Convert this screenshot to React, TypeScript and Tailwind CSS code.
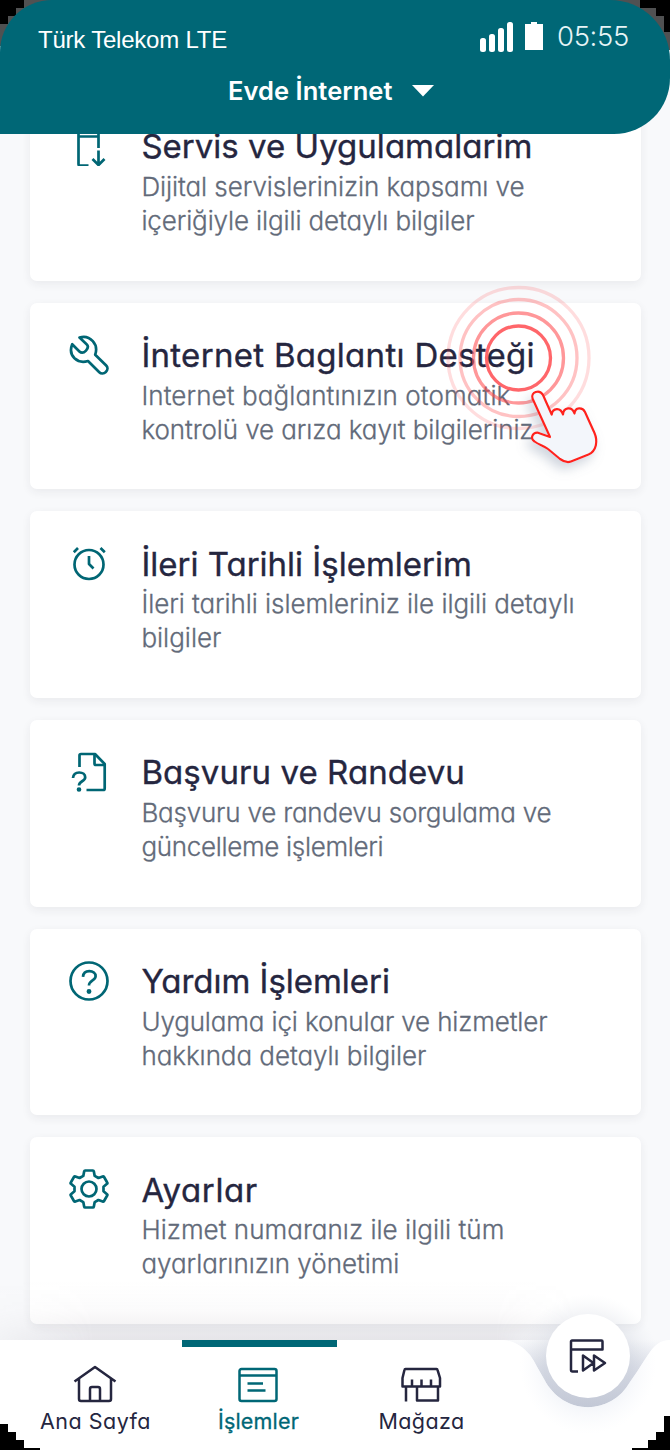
import { useLayoutEffect, useRef, useState, type ReactNode } from "react";

/* One line of text, tracked so that it fills the given width. */
function Line({ text, width, className = "" }: { text: string; width: number; className?: string }) {
  const ref = useRef<HTMLSpanElement>(null);
  const [spacing, setSpacing] = useState(0);
  useLayoutEffect(() => {
    if (ref.current) {
      const natural = ref.current.getBoundingClientRect().width;
      setSpacing((width - natural) / text.length);
    }
  }, [text, width]);
  return (
    <span className={"flex whitespace-nowrap " + className}>
      <span ref={ref} style={{ letterSpacing: `${spacing}px` }}>
        {text}
      </span>
    </span>
  );
}

type Row = { title: [string, number]; lines: [string, number][]; icon: ReactNode };

const ServiceIcon = () => (
  <g transform="translate(3.500 0)">
    <path d="M26 22V6a2 2 0 0 0-2-2H8a2 2 0 0 0-2 2v32a1.500 1.500 0 0 0 1.500 1.500H16M6 10.500h20" />
    <path d="M26 24.500v14.500M20 33l6 6 6-6" />
  </g>
);

const WrenchIcon = () => (
  <path d="M10.500 2.600 L17.600 9.200 C20 11.500 18.500 14 17 15.600 C15 17.700 12.500 18.400 10.400 16.400 L3.200 9.300 C0.500 16 2.200 20 5.500 23.300 C9 26.600 14 27.500 19 26 L30.300 37.200 C32 38.900 35 38.700 36.800 37 C38.800 35 39 32.300 37.200 30.500 L26.200 19.700 C28 14.500 26.800 9.500 23.800 6.200 C20 2 15.500 1 10.500 2.600Z" />
);

const AlarmIcon = () => (
  <g>
    <circle cx="20" cy="21.500" r="14.500" />
    <path d="M20 13v8l4.500 4.500M4.800 9.200 9 5M31.500 5l4.300 4.200" />
  </g>
);

const FileIcon = () => (
  <g>
    <path d="M10.500 15V3.500A1.500 1.500 0 0 1 12 2h14l9.700 10v24.500a1.500 1.500 0 0 1-1.500 1.500H17.500" />
    <path d="M25.500 2v9.500a1.500 1.500 0 0 0 1.500 1.500h9" />
    <path d="M4 26c.3-3.400 2.800-5.500 6.200-5.500 3.700 0 6 2 6 4.700 0 4.300-6.200 3.800-6.200 8.300" />
    <circle cx="10" cy="37.500" r="1" fill="#006674" />
  </g>
);

const HelpIcon = () => (
  <g>
    <circle cx="20" cy="20" r="18.500" />
    <path d="M14 15.800c.3-3.500 2.800-5.600 6.300-5.600 3.800 0 6.300 2.100 6.300 5 0 4.300-6.600 4.200-6.600 9.300" />
    <circle cx="20" cy="30.500" r="1.100" fill="#006674" />
  </g>
);

const GearIcon = () => (
  <g>
    <path d="M16.200 1.500h7.600a1 1 0 0 1 1 .8l.9 4.600 3.700 2.100 4.300-1.600a1 1 0 0 1 1.200.4l3.300 5.700a1 1 0 0 1-.2 1.300L34.500 17.800v4.400l3.500 3a1 1 0 0 1 .2 1.300l-3.300 5.700a1 1 0 0 1-1.200.4L29.400 31l-3.700 2.100-.9 4.600a1 1 0 0 1-1 .8h-7.600a1 1 0 0 1-1-.8l-.9-4.600L10.600 31l-4.300 1.600a1 1 0 0 1-1.200-.4l-3.300-5.700a1 1 0 0 1 .2-1.300l3.500-3v-4.400L2 14.800a1 1 0 0 1-.2-1.300l3.300-5.700a1 1 0 0 1 1.200-.4L10.600 9l3.700-2.100.9-4.600a1 1 0 0 1 1-.8Z" />
    <circle cx="20" cy="20" r="7.500" />
  </g>
);

const rows: Row[] = [
  { title: ["Servis ve Uygulamalarim", 391], lines: [["Dijital servislerinizin kapsamı ve", 383], ["içeriğiyle ilgili detaylı bilgiler", 333]], icon: <ServiceIcon /> },
  { title: ["İnternet Baglantı Desteği", 393.5], lines: [["Internet bağlantınızın otomatik", 369], ["kontrolü ve arıza kayıt bilgileriniz", 392]], icon: <WrenchIcon /> },
  { title: ["İleri Tarihli İşlemlerim", 330.5], lines: [["İleri tarihli islemleriniz ile ilgili detaylı", 433], ["bilgiler", 80]], icon: <AlarmIcon /> },
  { title: ["Başvuru ve Randevu", 323.5], lines: [["Başvuru ve randevu sorgulama ve", 410], ["güncelleme işlemleri", 242]], icon: <FileIcon /> },
  { title: ["Yardım İşlemleri", 248.5], lines: [["Uygulama içi konular ve hizmetler", 406], ["hakkında detaylı bilgiler", 285]], icon: <HelpIcon /> },
  { title: ["Ayarlar", 116.5], lines: [["Hizmet numaranız ile ilgili tüm", 363], ["ayarlarınızın yönetimi", 258]], icon: <GearIcon /> },
];

function Card({ row }: { row: Row }) {
  return (
    <article className="flex h-[186.5px] shrink-0 rounded-[7px] bg-white pt-[31px] pl-[39px] shadow-[0_3px_10px_rgba(40,45,60,0.07)]">
      <svg className="mt-px h-10 w-10 shrink-0" viewBox="0 0 40 40" fill="none" stroke="#006674" strokeWidth="2.7" strokeLinejoin="round">
        {row.icon}
      </svg>
      <div className="ml-[32.4px]">
        <Line text={row.title[0]} width={row.title[1]} className="h-[44px] items-center text-[33px] font-normal text-[#25263f] [-webkit-text-stroke:0.35px_#25263f]" />
        <div className="mt-px text-[26px] leading-[34px] text-[#626a79]">
          {row.lines.map(([text, width]) => (
            <Line key={text} text={text} width={width} className="h-[34px] items-center font-light [-webkit-text-stroke:0.3px_#626a79]" />
          ))}
        </div>
      </div>
    </article>
  );
}

function Header() {
  return (
    <header className="relative z-10 h-[134px] shrink-0">
      <svg className="absolute inset-x-0 top-0" width="670" height="60" shapeRendering="crispEdges">
        <path d="M0 0h60v46H0zM610 0h60v50h-60z" fill="#505152" />
        <path d="M0 0h24v8h-8v8H8v8H0zM640 0h30v32h-6V16h-8V8h-16z" fill="#000" />
      </svg>
      <div className="relative flex h-full flex-col rounded-tl-[52px] rounded-tr-[60px] rounded-br-[56px] bg-[#006776] text-white">
        <div className="flex h-[68px] items-center pt-[11px] pr-[41px] pl-[38px]">
          <Line text="Türk Telekom LTE" width={189} className="font-['Liberation_Sans',sans-serif] text-[24px]" />
          <svg className="mb-[5px] ml-auto" width="64" height="32" fill="#fff">
            <rect x="0" y="17" width="6" height="14" rx="2.500" />
            <rect x="9" y="13" width="6" height="18" rx="2.500" />
            <rect x="18" y="7" width="6" height="24" rx="2.500" />
            <rect x="27" y="1" width="6" height="30" rx="2.500" />
            <path d="M45 3h6V1h6v2h6v26H45z" />
          </svg>
          <Line text="05:55" width={72} className="mb-[5px] ml-[13px] text-[27.5px] font-light text-[#e6f4f6]" />
        </div>
        <div className="flex h-[46px] items-center pl-[228px]">
          <Line text="Evde İnternet" width={164.5} className="text-[25.5px] font-semibold" />
          <svg className="ml-[19.5px]" width="22" height="12" fill="#fff">
            <path d="M0 0h22L11 11.500z" />
          </svg>
        </div>
      </div>
    </header>
  );
}

function TapHint() {
  return (
    <svg className="absolute top-[280px] left-[430px] z-10" width="200" height="210" fill="none">
      <defs>
        <filter id="soft" x="-40%" y="-40%" width="180%" height="180%">
          <feDropShadow dx="-4" dy="6" stdDeviation="6" floodColor="#8795ac" floodOpacity="0.4" />
        </filter>
      </defs>
      <g stroke="#ff4b50" strokeWidth="3.300">
        <circle cx="88.500" cy="78" r="32" strokeOpacity="0.85" />
        <circle cx="88.500" cy="78" r="45" strokeOpacity="0.58" />
        <circle cx="88.500" cy="78" r="58.500" strokeOpacity="0.34" />
        <circle cx="88.500" cy="78" r="70.500" strokeOpacity="0.19" />
      </g>
      <path
        d="M102.500 118.500C100.500 112 109.500 109 113 115L121.700 134.500C122.500 128 130.500 126.500 133 134.500C133.500 127 142 126 144.500 133.500C145 127 152.500 127 155 132L164.500 153C168 161 166.500 171 158.500 174.500L141 181.500C137 183 133.500 181.500 130 179L118 169C114 165.500 109 165 104.500 161.500C99.500 158 103 152 108 152.700L120 157Z"
        fill="#f3f6fb"
        stroke="#ff241f"
        strokeWidth="2.200"
        strokeLinejoin="round"
        filter="url(#soft)"
      />
    </svg>
  );
}

function Tab({ label, width, active = false, children }: { label: string; width: number; active?: boolean; children: ReactNode }) {
  return (
    <button className={"flex w-[163px] flex-col items-center " + (active ? "text-[#006776] [-webkit-text-stroke:0.3px_#006776]" : "text-[#25263f]")}>
      <span className={"h-[7px] w-[155px] " + (active ? "relative left-px bg-[#006776]" : "")} />
      <svg className="mt-[17px] mr-px h-10 w-[44px]" viewBox="0 0 44 40" fill="none" stroke="currentColor" strokeWidth="2.500" strokeLinejoin="round">
        {children}
      </svg>
      <Line text={label} width={width} className="mt-[2px] h-[30px] items-center text-[21.5px]" />
    </button>
  );
}

const barEdge = "C514 50 522 56 530 65C535 72 539 81 544 89C563 126 611 126 630 92C636 84 643 72 650 62C655 55 660 50 670 50";

function BottomBar() {
  return (
    <nav className="absolute bottom-0 left-0 z-20 h-[110px] w-full">
      <svg className="absolute -top-[70px] left-0" width="670" height="180" viewBox="0 -20 670 180">
        <defs>
          <linearGradient id="shade" x1="0" y1="0" x2="0" y2="1">
            <stop offset="0" stopColor="#817889" stopOpacity="0" />
            <stop offset="0.500" stopColor="#817889" stopOpacity="0.030" />
            <stop offset="1" stopColor="#817889" stopOpacity="0.150" />
          </linearGradient>
          <linearGradient id="side" x1="0" y1="0" x2="1" y2="0">
            <stop offset="0" stopColor="#555" />
            <stop offset="0.140" stopColor="#fff" />
            <stop offset="0.740" stopColor="#fff" />
            <stop offset="0.860" stopColor="#000" />
          </linearGradient>
          <mask id="fade">
            <rect y="-20" width="670" height="90" fill="url(#side)" />
          </mask>
          <linearGradient id="notch" gradientUnits="userSpaceOnUse" x1="0" y1="50" x2="0" y2="117">
            <stop offset="0" stopColor="#a9b1c6" stopOpacity="0" />
            <stop offset="0.400" stopColor="#a9b1c6" stopOpacity="0.300" />
            <stop offset="1" stopColor="#a3abc0" stopOpacity="0.520" />
          </linearGradient>
          <radialGradient id="halo" gradientUnits="userSpaceOnUse" cx="588" cy="76" r="72">
            <stop offset="0.600" stopColor="#98a0b5" stopOpacity="0.200" />
            <stop offset="1" stopColor="#c7cedb" stopOpacity="0" />
          </radialGradient>
          <radialGradient id="glow" gradientUnits="userSpaceOnUse" cx="588" cy="76" r="68">
            <stop offset="0.500" stopColor="#b2bed8" stopOpacity="0.200" />
            <stop offset="1" stopColor="#d9e1f1" stopOpacity="0" />
          </radialGradient>
        </defs>
        <rect y="-10" width="670" height="60" fill="url(#shade)" mask="url(#fade)" />
        <circle cx="588" cy="76" r="72" fill="url(#halo)" />
        <path d={"M500 50" + barEdge + "Z"} fill="url(#notch)" />
        <path d={"M0 50H500" + barEdge + "V160H0Z"} fill="#fff" />
        <path d={"M500 50" + barEdge + "V160H500Z"} fill="url(#glow)" />
        <circle cx="588" cy="66" r="42" fill="#fff" />
        <g transform="translate(569.500 49)" fill="none" stroke="#25263f" strokeWidth="2.500" strokeLinejoin="round">
          <path d="M1.500 10.500h31.500v-8a1 1 0 0 0-1-1H2.500a1 1 0 0 0-1 1V31a1.500 1.500 0 0 0 1.500 1.500h5.500" />
          <path d="M13.500 16.500v15l10.500-7.500zM24.500 16.500v15L35.500 24z" />
        </g>
        <g fill="#000" shapeRendering="crispEdges">
          <path d="M0 134h8v8h8v8h8v8h16v2H0z" />
          <path d="M670 126h-6v16h-8v8h-8v8h-16v2h38z" />
        </g>
      </svg>
      <div className="relative flex pl-[14px]">
        <Tab label="Ana Sayfa" width={111}>
          <path d="M1.500 17.500 22 3l20.500 14.500M6 15v20a2 2 0 0 0 2 2h28a2 2 0 0 0 2-2V15M17 37V25a2 2 0 0 1 2-2h6a2 2 0 0 1 2 2v12" />
        </Tab>
        <Tab label="İşlemler" width={81} active>
          <path d="M5.500 5h33a2 2 0 0 1 2 2v28a2 2 0 0 1-2 2h-33a2 2 0 0 1-2-2V7a2 2 0 0 1 2-2ZM3.500 11.500h37M11.500 19.500h15.500M11.500 26.500h18" />
        </Tab>
        <Tab label="Mağaza" width={86}>
          <path d="M6.500 5h31a1 1 0 0 1 1 .8L41 14v8.500H3.500V14l2-8.200a1 1 0 0 1 1-.8ZM13 22.500v-7M22.500 22.500v-7M32 22.500v-7M7 23v14.500M18 23v13.500h21V23" />
        </Tab>
      </div>
    </nav>
  );
}

export default function App() {
  return (
    <div className="relative flex h-[1450px] w-[670px] flex-col overflow-hidden bg-[#f8f9fb] font-['Inter',sans-serif] [font-feature-settings:'cv11']">
      <Header />
      <main className="-mt-[40px] flex flex-col gap-[22.2px] pr-[29px] pl-[30px]">
        {rows.map((row) => (
          <Card key={row.title[0]} row={row} />
        ))}
      </main>
      <TapHint />
      <BottomBar />
    </div>
  );
}
